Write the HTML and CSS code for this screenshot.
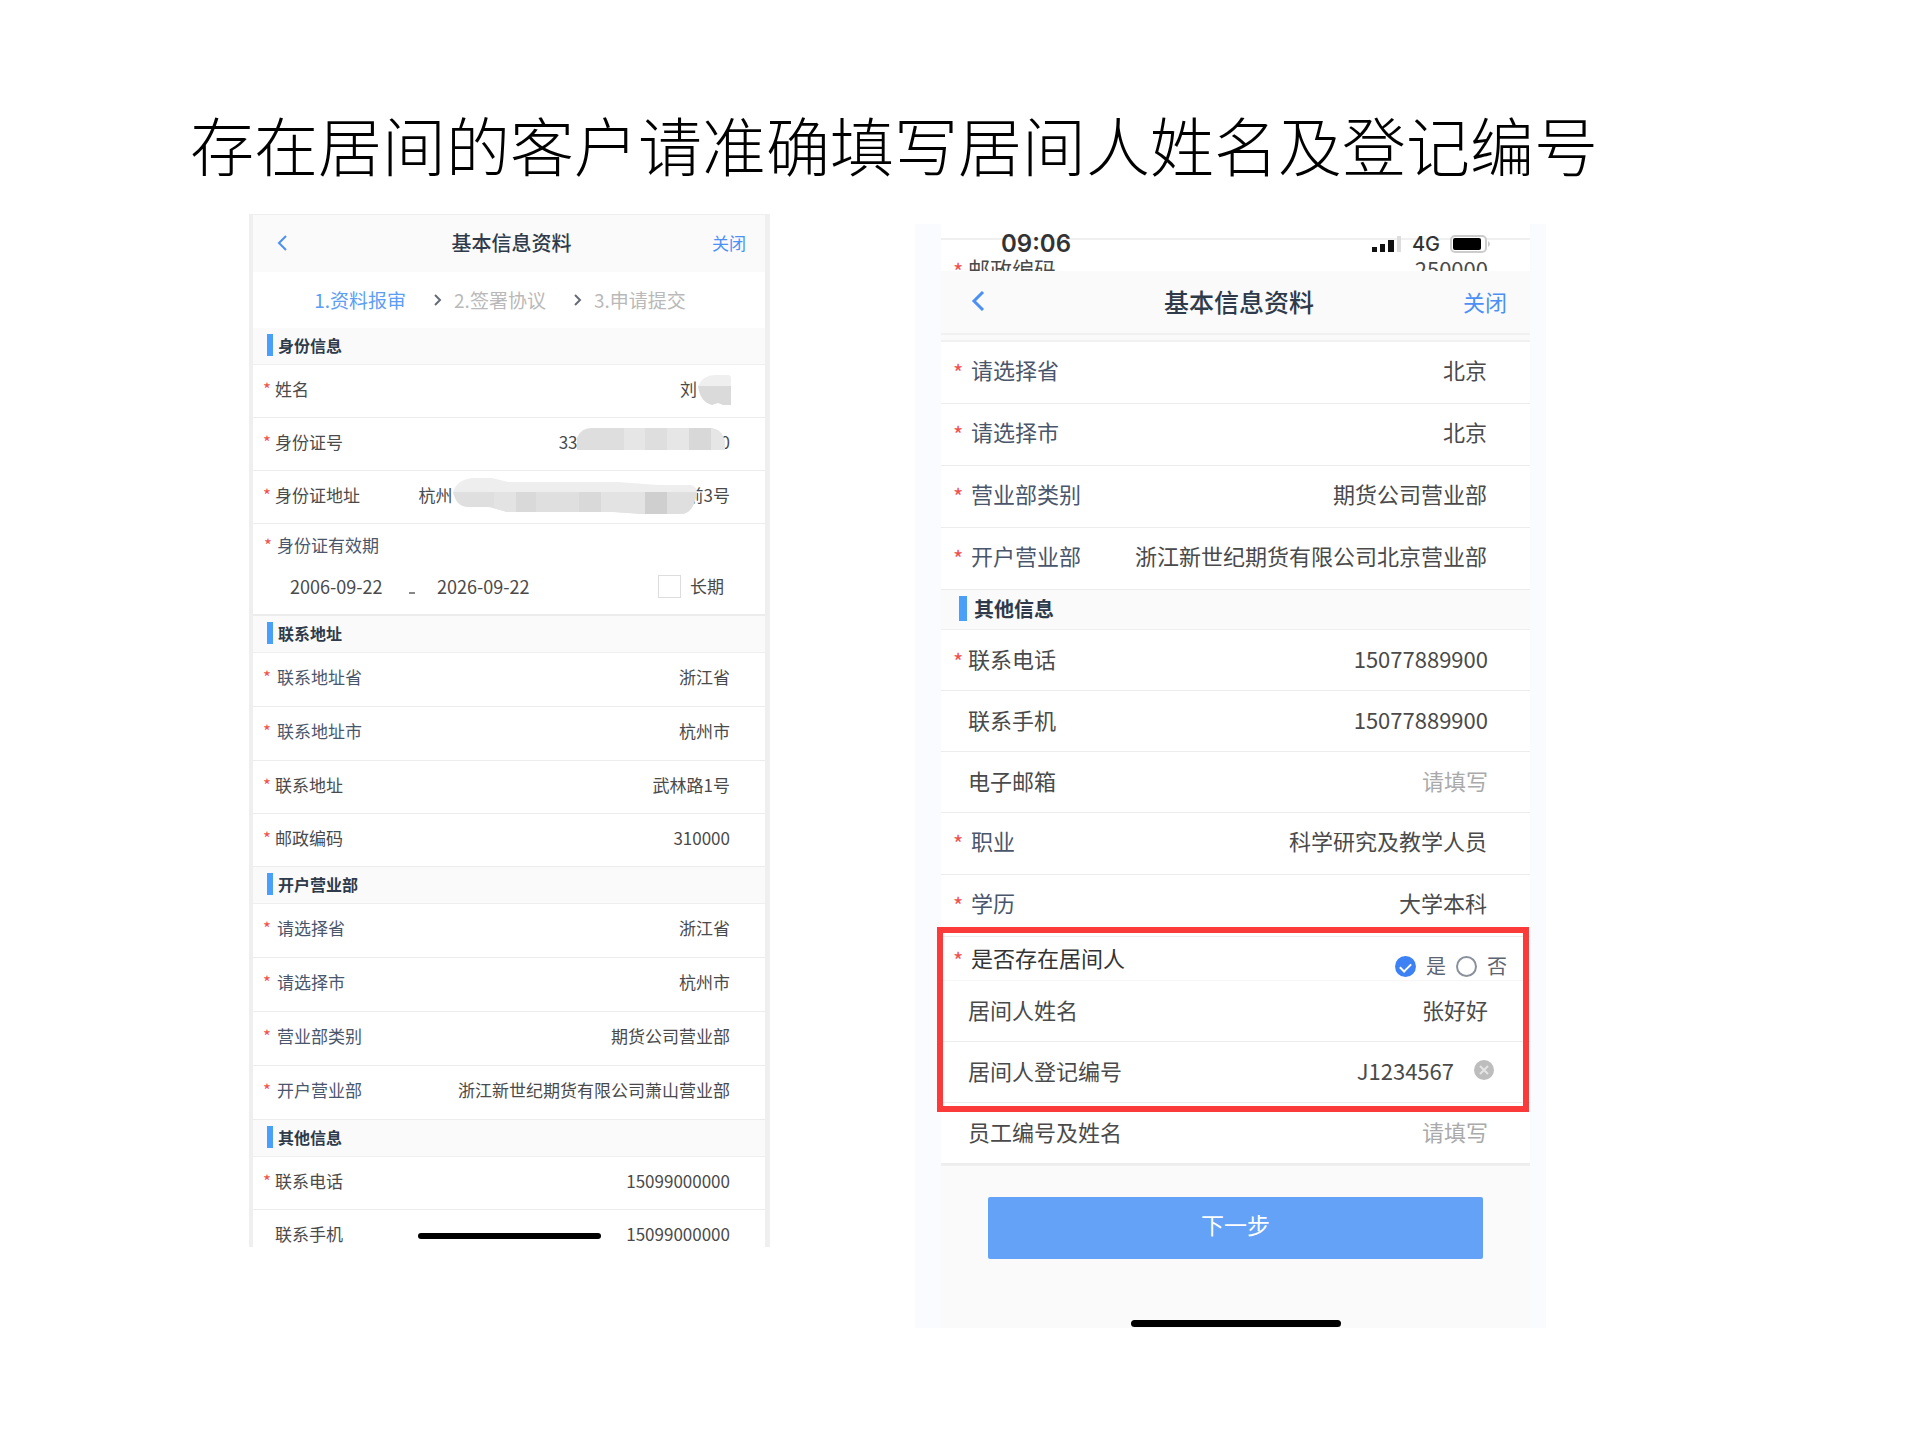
FILE: index.html
```html
<!DOCTYPE html>
<html lang="zh-CN">
<head>
    <meta charset="UTF-8">
    <meta name="viewport" content="width=device-width, initial-scale=1.0">
    <title>基本信息资料</title>
    <link rel="stylesheet" href="styles.css">
</head>
<body>
    <h1>存在居间的客户请准确填写居间人姓名及登记编号</h1>

    <main class="screens">
        <!-- First phone -->
        <form class="phone phone-a">
            <header class="navbar">
                <button type="button" class="back" aria-label="返回">
                    <svg width="10" height="16" viewBox="0 0 10 16"><path d="M9 1L2 8l7 7" fill="none" stroke="currentColor" stroke-width="2"/></svg>
                </button>
                <h2>基本信息资料</h2>
                <button type="button" class="close">关闭</button>
            </header>

            <div class="steps">
                <span class="active">1.资料报审</span>
                <svg width="8" height="12" viewBox="0 0 8 12"><path d="M1 1l5 5-5 5" fill="none" stroke="#666c76" stroke-width="2"/></svg>
                <span>2.签署协议</span>
                <svg width="8" height="12" viewBox="0 0 8 12"><path d="M1 1l5 5-5 5" fill="none" stroke="#666c76" stroke-width="2"/></svg>
                <span>3.申请提交</span>
            </div>

            <h3>身份信息</h3>
            <div class="row required">
                <span class="label">姓名</span>
                <span class="masked">刘<svg class="mask-name" width="34" height="30" viewBox="0 0 34 30"><path d="M1 11Q6 0 18 0h13q3 0 3 3v8z" fill="#efefef"/><path d="M1 11h33v19h-8l-5-2-6 2Q3 27 1 11z" fill="#dadada"/></svg></span>
            </div>
            <div class="row required">
                <span class="label">身份证号</span>
                <span class="masked">33<svg class="mask-id" width="148" height="22" viewBox="0 0 148 22"><path d="M0 22V10Q4 0 14 0h118q13 0 16 14v8z" fill="#dedede"/><path d="M47 0h21v22H47zM90 0h22v22H90zM134 0q11 2 14 14v8h-14z" fill="#e6e6e6"/><path d="M112 0h22v22h-22z" fill="#d8d8d8"/></svg>0</span>
            </div>
            <div class="row required">
                <span class="label">身份证地址</span>
                <span class="masked">杭州<svg class="mask-address" width="244" height="36" viewBox="0 0 244 36"><path d="M0 14Q5 0 22 0h17l16 4h110l40 3h33q6 2 6 7z" fill="#eeeeee"/><path d="M0 14h244q-3 22-16 22h-39l-28-2H54L36 29H14Q3 28 0 14z" fill="#dfdfdf"/><path d="M41 14h22v20h-9l-13-4zM148 14h44v22l-31-2h-13z" fill="#e3e3e3"/><path d="M63 14h20v20H63zM126 14h22v20h-22z" fill="#d9d9d9"/><path d="M192 14h22v22h-22z" fill="#cfcfcf"/></svg>前3号</span>
            </div>
            <fieldset class="validity">
                <legend class="required">身份证有效期</legend>
                <div class="dates">
                    <input type="text" class="date" aria-label="起始日期" value="2006-09-22">
                    <span class="dash"></span>
                    <input type="text" class="date" aria-label="截止日期" value="2026-09-22">
                    <label class="forever"><input type="checkbox">长期</label>
                </div>
            </fieldset>

            <h3>联系地址</h3>
            <div class="row pick required">
                <label for="a-province">联系地址省</label>
                <select id="a-province"><option>浙江省</option></select>
            </div>
            <div class="row pick required">
                <label for="a-city">联系地址市</label>
                <select id="a-city"><option>杭州市</option></select>
            </div>
            <div class="row required">
                <label for="a-address">联系地址</label>
                <input type="text" id="a-address" value="武林路1号">
            </div>
            <div class="row required">
                <label for="a-zip">邮政编码</label>
                <input type="text" id="a-zip" value="310000">
            </div>

            <h3>开户营业部</h3>
            <div class="row pick required">
                <label for="a-branch-province">请选择省</label>
                <select id="a-branch-province"><option>浙江省</option></select>
            </div>
            <div class="row pick required">
                <label for="a-branch-city">请选择市</label>
                <select id="a-branch-city"><option>杭州市</option></select>
            </div>
            <div class="row pick required">
                <label for="a-branch-type">营业部类别</label>
                <select id="a-branch-type"><option>期货公司营业部</option></select>
            </div>
            <div class="row pick required">
                <label for="a-branch">开户营业部</label>
                <select id="a-branch"><option>浙江新世纪期货有限公司萧山营业部</option></select>
            </div>

            <h3>其他信息</h3>
            <div class="row required">
                <label for="a-phone">联系电话</label>
                <input type="tel" id="a-phone" value="15099000000">
            </div>
            <div class="row last">
                <label for="a-mobile">联系手机</label>
                <input type="tel" id="a-mobile" value="15099000000">
            </div>
            <div class="home-bar"></div>
        </form>

        <!-- Second phone -->
        <div class="frame">
            <form class="phone phone-b">
                <div class="status">
                    <div class="status-line">
                        <span class="time">09:06</span>
                        <svg width="30" height="16" viewBox="0 0 30 16"><path d="M0 11h5v5H0zM8 8h5v8H8zM16 4h6v12h-6z" fill="#111"/><path d="M25 0h4v16h-4z" fill="#ddd"/></svg>
                        <span class="network">4G</span>
                        <svg width="42" height="18" viewBox="0 0 42 18"><rect x="1" y="1" width="35" height="16" rx="4" fill="#fff" stroke="#ccc" stroke-width="2"/><rect x="3" y="3" width="28" height="12" rx="2" fill="#000"/><path d="M38 6q4 3 0 6z" fill="#ccc"/></svg>
                    </div>
                    <div class="row required peek">
                        <label for="b-zip">邮政编码</label>
                        <input type="text" id="b-zip" value="250000">
                    </div>
                </div>
                <header class="navbar">
                    <button type="button" class="back" aria-label="返回">
                        <svg width="14" height="20" viewBox="0 0 14 20"><path d="M12 1L3 10l9 9" fill="none" stroke="currentColor" stroke-width="3"/></svg>
                    </button>
                    <h2>基本信息资料</h2>
                    <button type="button" class="close">关闭</button>
                </header>
                <div class="spacer"></div>

                <div class="row pick required">
                    <label for="b-province">请选择省</label>
                    <select id="b-province"><option>北京</option></select>
                </div>
                <div class="row pick required">
                    <label for="b-city">请选择市</label>
                    <select id="b-city"><option>北京</option></select>
                </div>
                <div class="row pick required">
                    <label for="b-type">营业部类别</label>
                    <select id="b-type"><option>期货公司营业部</option></select>
                </div>
                <div class="row pick required">
                    <label for="b-branch">开户营业部</label>
                    <select id="b-branch"><option>浙江新世纪期货有限公司北京营业部</option></select>
                </div>

                <h3>其他信息</h3>
                <div class="row required">
                    <label for="b-phone">联系电话</label>
                    <input type="tel" id="b-phone" value="15077889900">
                </div>
                <div class="row">
                    <label for="b-mobile">联系手机</label>
                    <input type="tel" id="b-mobile" value="15077889900">
                </div>
                <div class="row">
                    <label for="b-email">电子邮箱</label>
                    <input type="email" id="b-email" placeholder="请填写">
                </div>
                <div class="row pick required">
                    <label for="b-job">职业</label>
                    <select id="b-job"><option>科学研究及教学人员</option></select>
                </div>
                <div class="row pick required">
                    <label for="b-degree">学历</label>
                    <select id="b-degree"><option>大学本科</option></select>
                </div>

                <div class="highlight">
                    <div class="row choice required">
                        <span class="label">是否存在居间人</span>
                        <label class="option"><input type="radio" name="broker" checked>是</label>
                        <label class="option"><input type="radio" name="broker">否</label>
                    </div>
                    <div class="row">
                        <label for="b-broker">居间人姓名</label>
                        <input type="text" id="b-broker" value="张好好">
                    </div>
                    <div class="row clearable">
                        <label for="b-broker-no">居间人登记编号</label>
                        <input type="text" id="b-broker-no" value="J1234567">
                        <button type="button" class="clear" aria-label="清除">
                            <svg width="20" height="20" viewBox="0 0 20 20"><circle cx="10" cy="10" r="10" fill="#bdbdbd"/><path d="M6 6l8 8M14 6l-8 8" stroke="#e4e4e4" stroke-width="2"/></svg>
                        </button>
                    </div>
                </div>
                <div class="row">
                    <label for="b-staff">员工编号及姓名</label>
                    <input type="text" id="b-staff" placeholder="请填写">
                </div>

                <footer>
                    <button type="submit" class="next">下一步</button>
                    <div class="home-bar"></div>
                </footer>
            </form>
        </div>
    </main>
</body>
</html>
```
FILE: styles.css
```css
* {
    box-sizing: border-box;
}

body {
    margin: 0;
    padding: 103px 190px 112px;
    background: #fff;
    color: #4a4a4a;
    font-family: "Noto Sans CJK SC", sans-serif;
}

h1, h2, h3 {
    margin: 0;
}

h1 {
    font-family: "Liberation Serif", "Noto Sans CJK SC", serif;
    font-size: 64px;
    font-weight: 300;
    line-height: 94px;
    color: #000;
}

button, input, select {
    margin: 0;
    padding: 0;
    border: none;
    background: none;
    color: inherit;
    font: inherit;
    outline: none;
}

button {
    cursor: pointer;
}

.screens {
    display: grid;
    grid-template-columns: minmax(0, 521px) minmax(0, 631px);
    column-gap: 145px;
    align-items: start;
    padding: 17px 0 0 59px;
}

/* Navbar */
.navbar {
    display: grid;
    grid-template-columns: 1fr auto 1fr;
    align-items: center;
    background: #fafafa;
}

.navbar h2 {
    font-weight: 500;
    color: #2f3a4a;
}

.back, .close {
    color: #4a90f5;
}

.back {
    justify-self: start;
    display: flex;
}

.close {
    justify-self: end;
}

/* Form rows */
.row {
    display: flex;
    position: relative;
    border-bottom: 1px solid #ececec;
    background: #fff;
}

.row input, .row select, .masked {
    flex: 1;
    min-width: 0;
    text-align: right;
}

.row select {
    appearance: none;
    text-align-last: right;
}

.pick label {
    color: #4a566b;
}

.required {
    position: relative;
}

.required::before {
    content: "*";
    position: absolute;
    color: #f0504e;
}

input::placeholder {
    color: #aaa;
    opacity: 1;
}

h3 {
    display: flex;
    align-items: center;
    padding-bottom: 2px;
    background: #fafafa;
    border-bottom: 1px solid #efefef;
    color: #2f3a4a;
    font-weight: 700;
}

h3::before {
    content: "";
    background: #4a9ff8;
}

.home-bar {
    background: #000;
    border-radius: 4px;
}

/* First phone */
.phone-a {
    position: relative;
    border: solid #efefef;
    border-width: 1px 5px 0 4px;
    font-size: 17px;
    line-height: 24px;
}

.phone-a .navbar {
    height: 57px;
    padding: 0 19px 2px 24px;
}

.phone-a h2 {
    font-size: 20px;
}

.steps {
    display: flex;
    align-items: center;
    justify-content: center;
    gap: 12px;
    height: 56px;
    padding-right: 18px;
    color: #b9b9b9;
    font-size: 19px;
}

.steps svg {
    margin-left: 16px;
}

.steps .active {
    color: #5b9ef5;
}

.phone-a h3 {
    height: 37px;
    padding-left: 14px;
    font-size: 16px;
    gap: 5px;
}

.phone-a h3::before {
    width: 6px;
    height: 22px;
}

.phone-a .row {
    padding: 12px 35px 16px 22px;
}

.phone-a .row input, .phone-a .row select {
    height: 24px;
}

.phone-a .pick {
    padding: 12px 35px 17px 24px;
}

.phone-a .last {
    padding-bottom: 1px;
    border-bottom: none;
}

.phone-a .required::before {
    left: 10px;
}

.masked {
    display: flex;
    justify-content: flex-end;
}

.masked svg {
    flex: none;
    position: relative;
}

.mask-name {
    margin: -2px -1px -4px 0;
}

.mask-id {
    margin: -2px -4px 0 -1px;
}

.mask-address {
    margin: -5px -10px -7px 0;
}

.validity {
    margin: 0;
    padding: 9px 41px 16px 37px;
    border: none;
    border-bottom: 2px solid #ececec;
}

.validity legend {
    float: left;
    width: 100%;
    margin-left: -13px;
    padding: 0;
    color: #4a566b;
}

.phone-a legend.required::before {
    left: -13px;
}

.dates {
    clear: both;
    display: flex;
    align-items: center;
    padding-top: 17px;
}

.date {
    width: 96px;
    height: 24px;
    font-size: 18px;
}

.dash {
    width: 6px;
    height: 2px;
    margin: 14px 22px 0 23px;
    background: #888;
}

.forever {
    display: flex;
    align-items: center;
    gap: 9px;
    margin-left: auto;
}

.forever input {
    appearance: none;
    width: 23px;
    height: 23px;
    border: 1px solid #ddd;
}

.phone-a .home-bar {
    position: absolute;
    left: 165px;
    bottom: 8px;
    width: 183px;
    height: 6px;
}

/* Second phone */
.frame {
    margin-top: 10px;
    padding: 0 16px 0 26px;
    background: #f9fbff;
}

.phone-b {
    background: #fafafa;
    font-size: 22px;
    line-height: 32px;
}

.status {
    position: relative;
    height: 47px;
    overflow: hidden;
    background: linear-gradient(#f0f0f0, #f0f0f0) 0 14px / 100% 2px no-repeat #fff;
}

.status-line {
    display: flex;
    align-items: center;
    height: 40px;
    padding: 0 38px 0 60px;
    color: #333;
    font-family: Inter, sans-serif;
}

.time {
    margin-right: auto;
    font-size: 24px;
    font-weight: 600;
}

.network {
    margin: 0 10px;
    font-size: 20px;
    font-weight: 500;
}

.phone-b .navbar {
    height: 62px;
    padding: 0 23px 3px 30px;
}

.phone-b h2 {
    font-size: 25px;
}

.spacer {
    height: 9px;
    border: solid #f1f1f1;
    border-width: 2px 0;
}

.phone-b h3 {
    height: 40px;
    padding-left: 18px;
    gap: 7px;
    font-size: 20px;
}

.phone-b h3::before {
    width: 8px;
    height: 25px;
}

.phone-b .row {
    padding: 12px 42px 16px 27px;
}

.phone-b .row input, .phone-b .row select {
    height: 32px;
}

.phone-b .pick {
    padding: 11px 43px 18px 30px;
}

.phone-b .required::before {
    left: 12px;
    padding-top: 2px;
}

.phone-b .peek {
    position: absolute;
    top: 16px;
    width: 100%;
    background: none;
}

.highlight {
    position: relative;
}

/* Red frame round the broker rows */
.highlight::after {
    content: "";
    position: absolute;
    inset: -10px 1px -9px -4px;
    border: 6px solid #fb3a3a;
    z-index: 1;
    pointer-events: none;
}

.phone-b .choice {
    padding: 4px 23px 7px 30px;
    border-bottom-color: #f6f6f6;
}

.choice .label {
    margin-right: auto;
    color: #333;
}

.option {
    display: flex;
    align-items: center;
    gap: 10px;
    margin: 9px 0 -9px 10px;
    font-size: 20px;
    color: #5b6472;
}

.phone-b .option input {
    appearance: none;
    flex: none;
    width: 21px;
    height: 21px;
    border: 2px solid #8a919c;
    border-radius: 50%;
}

.phone-b .option input:checked {
    display: grid;
    place-items: center;
    border: none;
    background: #3d82f5;
}

.option input:checked::after {
    content: "";
    width: 9px;
    height: 5px;
    border: solid #fff;
    border-width: 0 0 2px 2px;
    transform: rotate(-45deg);
}

.phone-b .clearable {
    align-items: center;
    padding-right: 36px;
}

.clear {
    display: flex;
    margin-left: 20px;
}

footer {
    display: flex;
    flex-direction: column;
    align-items: center;
    gap: 61px;
    padding: 31px 47px 1px;
    border-top: 2px solid #efefef;
}

.next {
    width: 100%;
    height: 62px;
    padding-bottom: 8px;
    border-radius: 2px;
    background: #64a2f8;
    color: #fff;
    font-size: 23px;
}

footer .home-bar {
    width: 210px;
    height: 7px;
}
```
